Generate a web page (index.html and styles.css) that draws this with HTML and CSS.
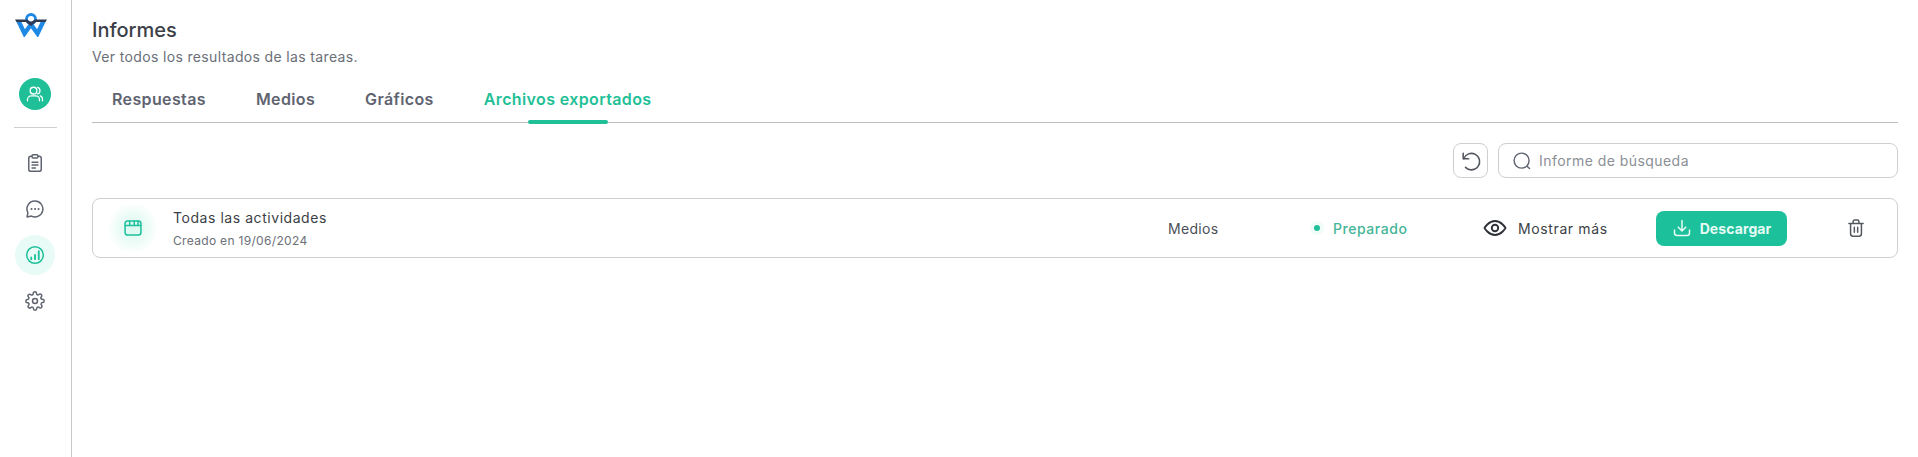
FILE: index.html
```html
<!DOCTYPE html>
<html lang="es">
<head>
  <meta charset="UTF-8">
  <title>Informes</title>
  <meta name="viewport" content="width=device-width, initial-scale=1.0">
  <link rel="stylesheet" href="styles.css">
</head>
<body>

<div class="app">
  <aside class="sidebar">
    <svg class="logo" width="32" height="24" viewBox="0 0 32 24" fill="none">
      <path d="M3.500 8 9.500 20.500 16 11.500l6.500 9L28.500 8" stroke="#1e88e5" stroke-width="4.400"/>
      <circle cx="16" cy="6" r="4.500" stroke="#1e88e5" stroke-width="2.800"/>
      <path d="M0 6.500h12L16 9l4-2.500h12L30.500 9H21l-5 4-5-4H1.500z" fill="#2f3a52"/>
    </svg>

    <div class="avatar">
      <svg width="18" height="18" viewBox="0 0 24 24" fill="none" stroke="#fff" stroke-width="1.700" stroke-linecap="round" stroke-linejoin="round">
        <circle cx="10" cy="7.500" r="4.500"/>
        <path d="M2 21v-1.500c0-3 2.500-5 5-5h6c2.500 0 5 2 5 5V21M15.500 3.200a4.500 4.500 0 0 1 0 8.600M19 14.600c1.800.6 3 2.400 3 4.400v2"/>
      </svg>
    </div>
    <div class="side-rule"></div>

    <nav class="side-nav">
      <a class="side-item">
        <svg width="20" height="20" viewBox="0 0 24 24" fill="none" stroke="#5f6470" stroke-width="1.800" stroke-linecap="round" stroke-linejoin="round">
          <rect x="4.500" y="4" width="15" height="18" rx="2.500"/>
          <rect x="8.500" y="2" width="7" height="4" rx="1.200" fill="#fff"/>
          <path d="M8.500 11h7M8.500 14.500h7M8.500 18h4"/>
        </svg>
      </a>
      <a class="side-item">
        <svg width="20" height="20" viewBox="0 0 24 24" fill="none" stroke="#5f6470" stroke-width="1.800" stroke-linecap="round" stroke-linejoin="round">
          <path d="M12 2.500a9.500 9.500 0 1 1-4.300 18L2.500 21.500l1-5A9.500 9.500 0 0 1 12 2.500z"/>
          <path d="M7.800 12h.1M12 12h.1M16.200 12h.1" stroke-width="2.400"/>
        </svg>
      </a>
      <a class="side-item active">
        <svg width="20" height="20" viewBox="0 0 24 24" fill="none" stroke="#1cc09a" stroke-width="1.800" stroke-linecap="round">
          <circle cx="12" cy="12" r="10"/>
          <path d="M7.500 17v-2M12 17v-5M16.500 17V7.500" stroke-width="2.200"/>
        </svg>
      </a>
      <a class="side-item">
        <svg width="20" height="20" viewBox="0 0 24 24" fill="none" stroke="#5f6470" stroke-width="1.800" stroke-linecap="round" stroke-linejoin="round">
          <circle cx="12" cy="12" r="3"/>
          <path d="M19.400 15a1.650 1.650 0 0 0 .33 1.820l.06.06a2 2 0 1 1-2.830 2.830l-.06-.06a1.650 1.650 0 0 0-2.800 1.170V21a2 2 0 1 1-4 0v-.09a1.650 1.650 0 0 0-2.900-1.100l-.06.06a2 2 0 1 1-2.830-2.830l.06-.06a1.650 1.650 0 0 0-1.170-2.800H3a2 2 0 1 1 0-4h.09a1.650 1.650 0 0 0 1.100-2.900l-.06-.06a2 2 0 1 1 2.830-2.830l.06.06a1.650 1.650 0 0 0 2.800-1.170V3a2 2 0 1 1 4 0v.09a1.650 1.650 0 0 0 2.800 1.170l.06-.06a2 2 0 1 1 2.830 2.830l-.06.06a1.650 1.650 0 0 0 1.170 2.800H21a2 2 0 1 1 0 4h-.09a1.650 1.650 0 0 0-1.510 1.110z"/>
        </svg>
      </a>
    </nav>
  </aside>

  <main class="content">
    <h1 class="page-title">Informes</h1>
    <p class="page-sub">Ver todos los resultados de las tareas.</p>

    <div class="tabs">
      <a class="tab">Respuestas</a>
      <a class="tab">Medios</a>
      <a class="tab">Gráficos</a>
      <a class="tab active">Archivos exportados</a>
    </div>

    <div class="toolbar">
      <button class="reload">
        <svg width="22" height="22" viewBox="0 0 24 24" fill="none" stroke="#55585f" stroke-width="1.700" stroke-linecap="round" stroke-linejoin="round">
          <path d="M4 9.500A9 9 0 1 1 6 19"/>
          <path d="M3.500 3.500v6h6"/>
        </svg>
      </button>
      <div class="search">
        <svg width="20" height="20" viewBox="0 0 24 24" fill="none" stroke="#5f6470" stroke-width="1.700" stroke-linecap="round">
          <circle cx="11.500" cy="11.500" r="9"/>
          <path d="m18.500 18.500 2.500 2.500"/>
        </svg>
        <span>Informe de búsqueda</span>
      </div>
    </div>

    <div class="report-row">
      <div class="report-name">
        <div class="report-icon">
          <svg width="20" height="20" viewBox="0 0 24 24" fill="none" stroke="#1cc09a" stroke-width="1.800" stroke-linecap="round" stroke-linejoin="round">
            <rect x="2.500" y="3.500" width="19" height="17" rx="3"/>
            <path d="M2.500 9h19M8 3.500V9M13.500 3.500V9M18 3.500V9"/>
          </svg>
        </div>
        <div>
          <div class="report-title">Todas las actividades</div>
          <div class="report-date">Creado en 19/06/2024</div>
        </div>
      </div>
      <div class="report-type">Medios</div>
      <div class="report-status"><span class="dot"></span>Preparado</div>
      <a class="show-more">
        <svg width="24" height="24" viewBox="0 0 24 24" fill="none" stroke="#2f3238" stroke-width="1.900" stroke-linecap="round" stroke-linejoin="round">
          <path d="M1.500 12S5.500 5 12 5s10.500 7 10.500 7-4 7-10.500 7S1.500 12 1.500 12z"/>
          <circle cx="12" cy="12" r="3.200"/>
        </svg>
        Mostrar más
      </a>
      <button class="download">
        <svg width="20" height="20" viewBox="0 0 24 24" fill="none" stroke="#e6fbf5" stroke-width="1.800" stroke-linecap="round" stroke-linejoin="round">
          <path d="M12 3v12M7.500 11l4.500 4.500 4.500-4.500M3 14.500V18a3 3 0 0 0 3 3h12a3 3 0 0 0 3-3v-3.500"/>
        </svg>
        Descargar
      </button>
      <a class="trash">
        <svg width="20" height="20" viewBox="0 0 24 24" fill="none" stroke="#55585f" stroke-width="1.800" stroke-linecap="round" stroke-linejoin="round">
          <path d="M3.500 6.500h17M8.500 6.500V4.500a2 2 0 0 1 2-2h3a2 2 0 0 1 2 2v2M5.500 6.500V19a3 3 0 0 0 3 3h7a3 3 0 0 0 3-3V6.500M10 11v6M14 11v6"/>
        </svg>
      </a>
    </div>
  </main>
</div>

</body>
</html>
```

FILE: styles.css
```css
html, body {
  margin: 0;
  padding: 0;
  height: 100%;
  background-color: #fff;
  font-family: Inter, "Noto Sans", sans-serif;
  color: #3c3f47;
  overflow: hidden;
}

.app {
  display: flex;
  height: 457px;
}

.sidebar {
  width: 70px;
  flex: none;
  border-right: 1px solid #c9c9c9;
  display: flex;
  flex-direction: column;
  align-items: center;
  padding: 13px 1px 0 0;
  box-sizing: content-box;
}

.logo {
  display: block;
  margin-right: 8px;
}

.avatar {
  width: 32px;
  height: 32px;
  margin-top: 41px;
  border-radius: 50%;
  background-color: #1fbf97;
  display: flex;
  align-items: center;
  justify-content: center;
}

.side-rule {
  width: 43px;
  height: 1px;
  margin-top: 17px;
  background-color: #cfcfcf;
}

.side-nav {
  display: flex;
  flex-direction: column;
  align-items: center;
  margin-top: 15px;
  gap: 6px;
}

.side-item {
  width: 40px;
  height: 40px;
  border-radius: 50%;
  display: flex;
  align-items: center;
  justify-content: center;
}

.side-item.active {
  background-color: #e8fbf6;
}

.content {
  flex: 1;
  padding: 0 20px;
}

.page-title {
  margin: 17px 0 0;
  font-size: 20px;
  line-height: 26px;
  font-weight: 500;
}

.page-sub {
  margin: 4px 0 0;
  font-size: 14px;
  line-height: 20px;
  letter-spacing: 0.35px;
  color: #6b6f78;
}

.tabs {
  display: flex;
  gap: 10px;
  height: 36px;
  margin-top: 19px;
  border-bottom: 1px solid #bcbcbc;
}

.tab {
  position: relative;
  padding: 0 20px;
  font-size: 16px;
  line-height: 26px;
  font-weight: 600;
  letter-spacing: 0.37px;
  color: #5f6470;
}

.tab.active {
  color: #1fbf97;
}

.tab.active::after {
  content: "";
  position: absolute;
  left: 50%;
  bottom: -2px;
  width: 80px;
  height: 4px;
  margin-left: -40px;
  border-radius: 2px;
  background-color: #1fbf97;
}

.toolbar {
  display: flex;
  justify-content: flex-end;
  gap: 10px;
  margin-top: 20px;
}

.reload {
  width: 35px;
  height: 35px;
  padding: 0;
  border: 1px solid #cfcfcf;
  border-radius: 8px;
  background: #fff;
  display: flex;
  align-items: center;
  justify-content: center;
}

.search {
  width: 400px;
  height: 35px;
  box-sizing: border-box;
  border: 1px solid #cfcfcf;
  border-radius: 8px;
  padding-left: 13px;
  display: flex;
  align-items: center;
  gap: 7px;
  font-size: 14px;
  letter-spacing: 0.45px;
  color: #8b8f96;
}

.report-row {
  display: grid;
  grid-template-columns: 1fr 142px 173px 173px 131px 110px;
  align-items: center;
  height: 60px;
  box-sizing: border-box;
  margin-top: 20px;
  border: 1px solid #cfcfcf;
  border-radius: 8px;
  padding-left: 15px;
}

.report-name {
  display: flex;
  align-items: center;
  gap: 15px;
}

.report-icon {
  width: 50px;
  height: 50px;
  border-radius: 50%;
  background: radial-gradient(circle, #d9f9ef 0, #eefcf8 45%, #fff 72%);
  display: flex;
  align-items: center;
  justify-content: center;
}

.report-title {
  font-size: 14px;
  line-height: 20px;
  font-weight: 400;
  letter-spacing: 0.55px;
}

.report-date {
  margin-top: 5px;
  font-size: 12px;
  line-height: 16px;
  letter-spacing: 0.32px;
  color: #6b6f78;
}

.report-type {
  font-size: 14px;
  letter-spacing: 0.3px;
  color: #4b4f57;
}

.report-status {
  display: flex;
  align-items: center;
  gap: 10px;
  font-size: 14px;
  font-weight: 500;
  letter-spacing: 0.55px;
  color: #45b598;
}

.dot {
  width: 6px;
  height: 6px;
  border-radius: 50%;
  background-color: #1fbf97;
  box-shadow: 0 0 0 4px #f0fcf8;
  margin-left: 4px;
  margin-right: 3px;
}

.show-more {
  display: flex;
  align-items: center;
  gap: 11px;
  font-size: 14px;
  letter-spacing: 0.62px;
  color: #3c3f47;
}

.download {
  height: 35px;
  padding: 0;
  border: 0;
  border-radius: 8px;
  background-color: #1cc09a;
  color: #e6fbf5;
  font-family: inherit;
  font-size: 14px;
  font-weight: 700;
  letter-spacing: 0.1px;
  display: flex;
  align-items: center;
  justify-content: center;
  gap: 8px;
}

.trash {
  display: flex;
  justify-content: flex-end;
  padding-right: 31px;
}
```
